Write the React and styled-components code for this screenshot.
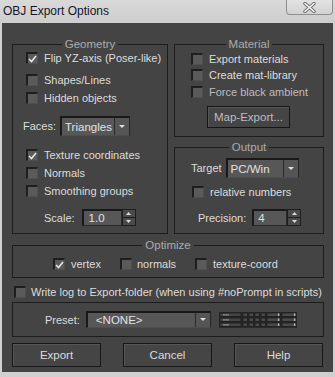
import React from 'react'
import styled, { createGlobalStyle } from 'styled-components'

const GlobalStyle = createGlobalStyle`
  html, body { margin: 0; padding: 0; background: #d2d2d2; }
  body { font-family: "Liberation Sans", Arial, sans-serif; font-size: 11px; }
  * { box-sizing: border-box; }
`

const Window = styled.div`
  width: 335px;
  height: 377px;
  background: #d0d0d0;
  display: flex;
  flex-direction: column;
`

const TitleBar = styled.div`
  height: 23px;
  display: flex;
  align-items: flex-start;
  justify-content: space-between;
  background: linear-gradient(#d9d9d9, #cdcdcd);
`

const Title = styled.span`
  margin: 4px 0 0 3px;
  font-family: "Liberation Sans", Arial, sans-serif;
  font-size: 12px;
  color: #161628;
`

const CloseButton = styled.div`
  width: 47px;
  height: 15px;
  margin-right: 2px;
  border: 1px solid #8e8e8e;
  border-top: none;
  border-radius: 0 0 4px 4px;
  background: linear-gradient(#e2e2e2, #d2d2d2);
  display: flex;
  align-items: center;
  justify-content: center;
`

const Body = styled.div`
  flex: 1;
  margin: 0 2px 5px 2px;
  background: #444444;
  padding: 14px 9px 0 10px;
  display: flex;
  flex-direction: column;
  color: #dcdcdc;
`

const TopArea = styled.div`
  display: flex;
  gap: 6px;
`

const RightColumn = styled.div`
  width: 150px;
  display: flex;
  flex-direction: column;
  gap: 3px;
`

const Group = styled.fieldset`
  margin: ${p => p.$mt || 0}px 0 0 0;
  padding: 0;
  min-width: 0;
  width: ${p => p.$w ? p.$w + 'px' : 'auto'};
  height: ${p => p.$h}px;
  border: 1px solid #1c1c1c;
  display: flex;
  flex-direction: column;
`

const Legend = styled.legend`
  margin: 0 auto;
  padding: 0 3px;
  font-size: 11.5px;
  line-height: 14px;
  color: #ababab;
`

const Row = styled.div`
  display: flex;
  align-items: center;
  height: ${p => p.$h || 14}px;
  margin-top: ${p => p.$mt || 0}px;
  padding-left: ${p => p.$pl || 0}px;
  gap: ${p => p.$gap || 0}px;
`

const Box = styled.span`
  width: 12px;
  height: 12px;
  flex: none;
  background: #5a5a5a;
  border-top: 2px solid #1e1e1e;
  border-left: 2px solid #1e1e1e;
  border-right: 1px solid #505050;
  border-bottom: 1px solid #505050;
  display: flex;
  align-items: center;
  justify-content: center;
`

const Label = styled.span`
  margin-left: ${p => p.$ml ?? 6}px;
  white-space: nowrap;
  color: ${p => p.$dim ? '#bdbdbd' : '#dcdcdc'};
`

const Check = ({ checked, label, dim, ml }) => (
  <>
    <Box>
      {checked && (
        <svg width="9" height="8" viewBox="0 0 9 8">
          <path d="M1 4 L3.5 6.5 L8 1" stroke="#e6e6e6" strokeWidth="1.6" fill="none" />
        </svg>
      )}
    </Box>
    {label && <Label $dim={dim} $ml={ml}>{label}</Label>}
  </>
)

const Select = styled.div`
  width: ${p => p.$w}px;
  height: ${p => p.$h}px;
  margin-left: ${p => p.$ml || 0}px;
  background: #575757;
  border-top: 2px solid #191919;
  border-left: 2px solid #191919;
  border-right: 1px solid #262626;
  border-bottom: 1px solid #4e4e4e;
  display: flex;
  align-items: center;
`

const SelectText = styled.span`
  flex: 1;
  padding-left: ${p => p.$pl || 3}px;
  color: #e2e2e2;
  font-size: 11.5px;
  white-space: nowrap;
`

const ArrowPart = styled.span`
  width: 15px;
  height: 100%;
  border-left: 1px solid #2a2a2a;
  display: flex;
  align-items: center;
  justify-content: center;
  background: #555;
`

const Arrow = () => (
  <svg width="6" height="4" viewBox="0 0 6 4">
    <path d="M0 0 H6 L3 3 Z" fill="#e0e0e0" />
  </svg>
)

const Dropdown = ({ w, h, ml, text, pl }) => (
  <Select $w={w} $h={h} $ml={ml}>
    <SelectText $pl={pl}>{text}</SelectText>
    <ArrowPart><Arrow /></ArrowPart>
  </Select>
)

const Field = styled.div`
  width: ${p => p.$w}px;
  height: 17px;
  margin-left: ${p => p.$ml || 0}px;
  background: #575757;
  border-top: 2px solid #191919;
  border-left: 2px solid #191919;
  border-right: 1px solid #2a2a2a;
  border-bottom: 1px solid #2a2a2a;
  padding-left: ${p => p.$pl || 4}px;
  display: flex;
  align-items: center;
  color: #e2e2e2;
  font-size: 11.5px;
`

const Spin = styled.div`
  width: 14px;
  height: 17px;
  display: flex;
  flex-direction: column;
  border: 1px solid #1e1e1e;
  background: #4a4a4a;
`

const SpinHalf = styled.span`
  flex: 1;
  display: flex;
  align-items: center;
  justify-content: center;
  border-bottom: ${p => p.$top ? '1px solid #1e1e1e' : 'none'};
`

const Spinner = () => (
  <Spin>
    <SpinHalf $top>
      <svg width="5" height="3" viewBox="0 0 5 3"><path d="M0 3 H5 L2.5 0 Z" fill="#dcdcdc" /></svg>
    </SpinHalf>
    <SpinHalf>
      <svg width="5" height="3" viewBox="0 0 5 3"><path d="M0 0 H5 L2.5 3 Z" fill="#dcdcdc" /></svg>
    </SpinHalf>
  </Spin>
)

const Button = styled.button`
  width: ${p => p.$w}px;
  height: ${p => p.$h}px;
  margin-left: ${p => p.$ml || 0}px;
  padding: 0;
  background: #454545;
  border: 1px solid #161616;
  box-shadow: inset 1px 1px 0 #565656;
  font-family: "Liberation Sans", Arial, sans-serif;
  font-size: 11.5px;
  color: ${p => p.$dim ? '#bcbcbc' : '#dcdcdc'};
`

const OptItem = styled.div`
  width: ${p => p.$w}px;
  display: flex;
  align-items: center;
`

const PresetBox = styled.div`
  height: 35px;
  margin-top: 3px;
  border: 1px solid #1c1c1c;
  padding-left: 32px;
  display: flex;
  align-items: center;
`

const ButtonRow = styled.div`
  display: flex;
  justify-content: space-between;
  margin-top: 6px;
  padding-right: 1px;
`

const MiniLayout = () => {
  const rows = [0, 5, 10]
  return (
    <svg width="78" height="16" viewBox="0 0 78 16" style={{ marginLeft: 8 }}>
      <rect x="0" y="0" width="78" height="16" fill="#2b2b2b" />
      {rows.map(y => (
        <g key={y}>
          <rect x="1" y={y + 1} width="21" height="3.5" fill="#444" stroke="#111" strokeWidth="0.6" />
          <rect x="4" y={y + 2.4} width="6" height="1" fill="#9a9a9a" />
          {[24, 30, 36, 42].map(x => (
            <rect key={x} x={x} y={y + 1} width="4.5" height="3.5" fill="#4a4a4a" stroke="#111" strokeWidth="0.6" />
          ))}
          <rect x="48" y={y + 1} width="13" height="3.5" fill="#4a4a4a" stroke="#111" strokeWidth="0.6" />
          <rect x="59" y={y + 1.4} width="1.3" height="2.6" fill="#bbb" />
          <rect x="63" y={y + 1} width="14" height="3.5" fill="#4a4a4a" stroke="#111" strokeWidth="0.6" />
          <rect x="75" y={y + 1.4} width="1.3" height="2.6" fill="#bbb" />
        </g>
      ))}
    </svg>
  )
}

export default function App() {
  return (
    <Window>
      <GlobalStyle />
      <TitleBar>
        <Title>OBJ Export Options</Title>
        <CloseButton>
          <svg width="13" height="11" viewBox="0 0 13 11">
            <path d="M2 1.5 L11 9.5 M11 1.5 L2 9.5" stroke="#6f6f6f" strokeWidth="3.4" strokeLinecap="round" />
            <path d="M2 1.5 L11 9.5 M11 1.5 L2 9.5" stroke="#f4f4f4" strokeWidth="1.6" strokeLinecap="round" />
          </svg>
        </CloseButton>
      </TitleBar>
      <Body>
        <TopArea>
          <Group $w={156} $h={197}>
            <Legend>Geometry</Legend>
            <Row $pl={13}><Check checked label="Flip YZ-axis (Poser-like)" /></Row>
            <Row $pl={13} $mt={8}><Check label="Shapes/Lines" /></Row>
            <Row $pl={13} $mt={4}><Check label="Hidden objects" /></Row>
            <Row $pl={10} $mt={11} $h={20}>
              <span>Faces:</span>
              <Dropdown w={70} h={20} ml={4} text="Triangles" />
            </Row>
            <Row $pl={13} $mt={12}><Check checked label="Texture coordinates" /></Row>
            <Row $pl={13} $mt={4}><Check label="Normals" /></Row>
            <Row $pl={13} $mt={4}><Check label="Smoothing groups" /></Row>
            <Row $pl={31} $mt={11} $h={17}>
              <span>Scale:</span>
              <Field $w={40} $ml={7} $pl={5}>1.0</Field>
              <Spinner />
            </Row>
          </Group>
          <RightColumn>
            <Group $h={100}>
              <Legend>Material</Legend>
              <Row $pl={16} $mt={1}><Check label="Export materials" /></Row>
              <Row $pl={16} $mt={2}><Check label="Create mat-library" /></Row>
              <Row $pl={16} $mt={3}><Check label="Force black ambient" dim /></Row>
              <Row $pl={32} $mt={7} $h={22}>
                <Button $w={83} $h={22} $dim>Map-Export...</Button>
              </Row>
            </Group>
            <Group $h={94}>
              <Legend>Output</Legend>
              <Row $pl={16} $mt={4} $h={20}>
                <span>Target</span>
                <Dropdown w={73} h={20} ml={4} text="PC/Win" />
              </Row>
              <Row $pl={17} $mt={7}><Check label="relative numbers" /></Row>
              <Row $pl={23} $mt={10} $h={17}>
                <span>Precision:</span>
                <Field $w={35} $ml={6}>4</Field>
                <Spinner />
              </Row>
            </Group>
          </RightColumn>
        </TopArea>
        <Group $h={40} $mt={4}>
          <Legend>Optimize</Legend>
          <Row $pl={40} $mt={5}>
            <OptItem $w={67}><Check checked label="vertex" /></OptItem>
            <OptItem $w={75}><Check label="normals" ml={5} /></OptItem>
            <OptItem $w={110}><Check label="texture-coord" ml={6} /></OptItem>
          </Row>
        </Group>
        <Row $pl={2} $mt={7}>
          <Check label="Write log to Export-folder (when using #noPrompt in scripts)" ml={5} />
        </Row>
        <PresetBox>
          <span>Preset:</span>
          <Dropdown w={125} h={17} ml={6} text="<NONE>" pl={8} />
          <MiniLayout />
        </PresetBox>
        <ButtonRow>
          <Button $w={89} $h={24}>Export</Button>
          <Button $w={89} $h={24}>Cancel</Button>
          <Button $w={89} $h={24}>Help</Button>
        </ButtonRow>
      </Body>
    </Window>
  )
}
